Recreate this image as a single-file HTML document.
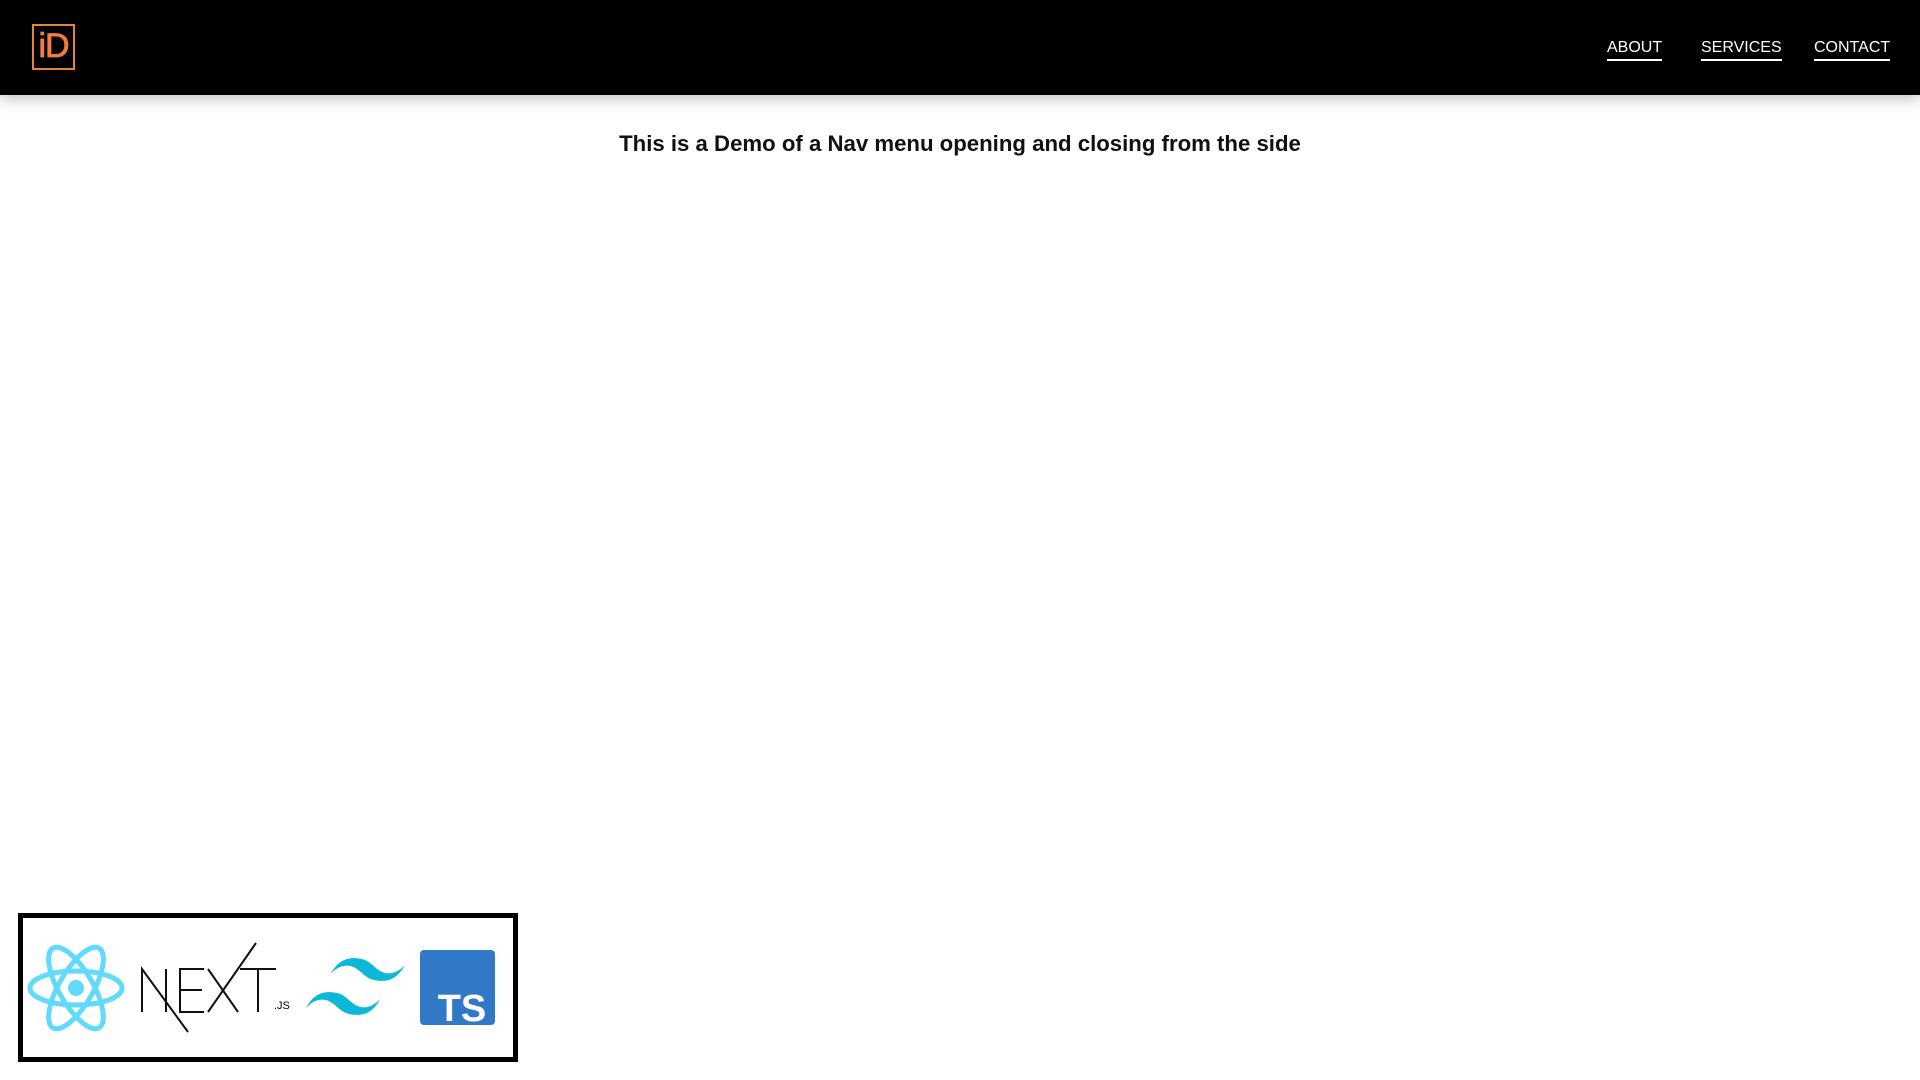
<!DOCTYPE html>
<html><head><meta charset="utf-8"><style>
*{margin:0;padding:0;box-sizing:border-box}
body{width:1920px;height:1080px;background:#fff;font-family:"Liberation Sans",sans-serif;position:relative;overflow:hidden}
nav{position:absolute;left:0;top:0;width:1920px;height:95px;background:#000;box-shadow:0 4px 14px rgba(0,0,0,.25)}
.logo{position:absolute;left:32px;top:24px;width:43px;height:46px;border:2px solid #e8843a;color:#f47c3c;font-size:34px;line-height:40px;text-align:center;letter-spacing:-1px;-webkit-text-stroke:0.8px #f47c3c}
.links a{position:absolute;top:39px;color:#fff;font-size:16px;text-decoration:none;border-bottom:2px solid #fff;padding-bottom:2px;line-height:18px}
h1{position:absolute;top:131px;width:1920px;text-align:center;font-size:22.2px;font-weight:bold;color:#111}
.box{position:absolute;left:18px;top:913px;width:500px;height:149px;border:5px solid #000}
</style></head><body>
<nav><div class="logo">iD</div>
<div class="links"><a style="left:1607px">ABOUT</a><a style="left:1701px">SERVICES</a><a style="left:1814px">CONTACT</a></div></nav>
<h1>This is a Demo of a Nav menu opening and closing from the side</h1>
<div class="box">
<svg width="490" height="139" viewBox="23 918 490 139" style="position:absolute;left:0;top:0">
<g fill="none" stroke="#61dafb" stroke-width="5">
<ellipse cx="76" cy="988" rx="46" ry="17"/>
<ellipse cx="76" cy="988" rx="46" ry="17" transform="rotate(60 76 988)"/>
<ellipse cx="76" cy="988" rx="46" ry="17" transform="rotate(120 76 988)"/>
</g><circle cx="76" cy="988" r="8" fill="#61dafb"/>
<g stroke="#111" stroke-width="2" fill="none">
<path d="M142 1012V969L188 1032"/><path d="M166 969V1012"/>
<path d="M204 969h-24v43h24M180 990h22"/>
<path d="M208 969L238 1012M256 943L208 1012"/>
<path d="M240 969h36M258 969v43"/>
</g>
<text x="274" y="1009" font-size="11" font-family="Liberation Sans">.JS</text>
<g transform="translate(306 958) scale(1.03 1.0)">
<path d="M24 16c7-14 17-18 30-15 9 2 13 10 20 13 7 3 15 1 22-7-7 14-17 18-30 15-9-2-13-10-20-13-7-3-15-1-22 7zM0 50c7-14 17-18 30-15 9 2 13 10 20 13 7 3 15 1 22-7-7 14-17 18-30 15-9-2-13-10-20-13-7-3-15-1-22 7z" fill="#0bb8d8"/>
</g>
<rect x="420" y="950" width="75" height="75" rx="4" fill="#3178c6"/>
<text x="462" y="1021" font-size="38" font-weight="bold" fill="#fff" text-anchor="middle" font-family="Liberation Sans">TS</text>
</svg></div>
</body></html>
